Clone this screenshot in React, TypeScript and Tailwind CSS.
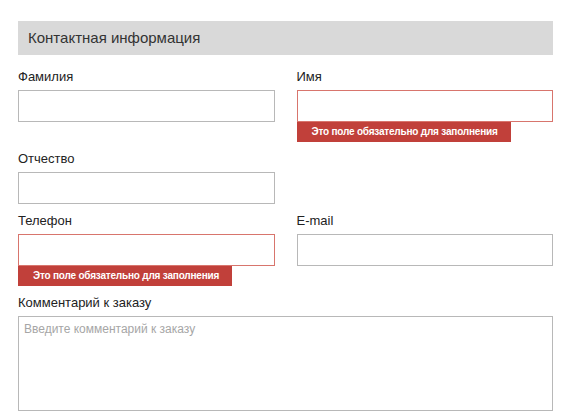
import React from "react";

const font = { fontFamily: "'Liberation Sans', Arial, sans-serif" };

function Field({ label, error }: { label: string; error?: boolean }) {
  return (
    <div className="mb-[10px]">
      <div className="text-[13px] leading-[14px] mb-[6px] text-[#222]">{label}</div>
      <div
        className={
          "h-[32px] bg-white border " +
          (error ? "border-[#d8756d]" : "border-[#b8b8b8]")
        }
      />
      {error && (
        <div className="w-[214px] h-[20px] bg-[#c1403a] text-white text-[10px] leading-[20px] font-bold tracking-[-0.2px] pl-[15px] whitespace-nowrap">
          Это поле обязательно для заполнения
        </div>
      )}
    </div>
  );
}

export default function App() {
  return (
    <div className="w-[569px] h-[414px] bg-white overflow-hidden" style={font}>
      <div className="pl-[18px] pr-[16px] pt-[21px]">
        <div className="h-[34px] bg-[#d9d9d9] pl-[10px] flex items-center text-[15px] text-[#333]">
          Контактная информация
        </div>
        <div className="mt-[15px] grid grid-cols-2 gap-x-[22px]">
          <Field label="Фамилия" />
          <Field label="Имя" error />
          <Field label="Отчество" />
          <div />
          <Field label="Телефон" error />
          <Field label="E-mail" />
        </div>
        <div>
          <div className="text-[13px] leading-[14px] mb-[6px] text-[#222]">Комментарий к заказу</div>
          <div className="h-[95px] border border-[#b8b8b8] px-[5px] py-[5px] text-[12px] leading-[15px] text-[#a6a6a6]">
            Введите комментарий к заказу
          </div>
        </div>
      </div>
    </div>
  );
}
